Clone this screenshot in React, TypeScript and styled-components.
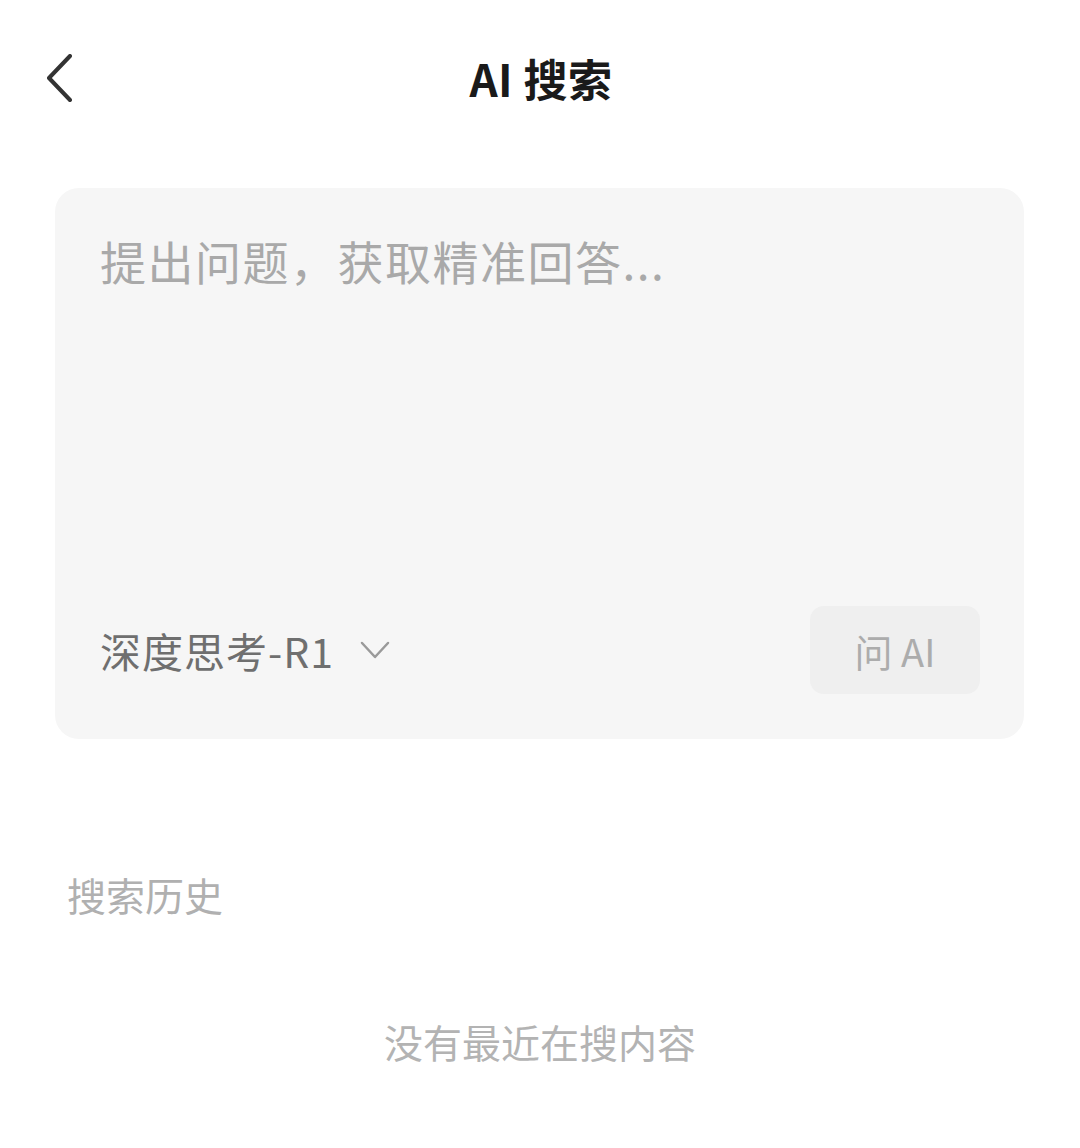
import React, { useState } from "react";
import styled, { createGlobalStyle } from "styled-components";

const GlobalStyle = createGlobalStyle`
  html, body {
    margin: 0;
    padding: 0;
    background: #ffffff;
  }
  body {
    font-family: "Noto Sans CJK SC", "Noto Sans", sans-serif;
    -webkit-font-smoothing: antialiased;
  }
`;

const Page = styled.div`
  width: 1080px;
  min-height: 1148px;
  background: #fff;
  display: flex;
  flex-direction: column;
`;

const Header = styled.div`
  height: 156px;
  display: grid;
  grid-template-columns: 1fr auto 1fr;
  align-items: center;
  padding: 0 40px 0 42px;
  box-sizing: border-box;
`;

const BackButton = styled.button`
  justify-self: start;
  width: 40px;
  height: 56px;
  padding: 0;
  border: none;
  background: none;
  display: flex;
  align-items: center;
  justify-content: flex-start;
  cursor: pointer;
`;

const Title = styled.h1`
  margin: 0;
  font-size: 44px;
  font-weight: 700;
  color: #1a1a1a;
  letter-spacing: 0.5px;
`;

const AskCard = styled.div`
  margin: 32px 56px 0 55px;
  height: 551px;
  box-sizing: border-box;
  background: #f6f6f6;
  border-radius: 24px;
  padding: 43px 44px 45px 45px;
  display: flex;
  flex-direction: column;
  justify-content: space-between;
`;

const QuestionInput = styled.textarea`
  border: none;
  outline: none;
  background: transparent;
  resize: none;
  height: 300px;
  padding: 0;
  font-family: inherit;
  font-size: 46px;
  line-height: 1.3;
  letter-spacing: 1.5px;
  color: #333;
  &::placeholder {
    color: #a9a9a9;
  }
`;

const Footer = styled.div`
  display: flex;
  align-items: center;
  justify-content: space-between;
`;

const ModelPicker = styled.button`
  border: none;
  background: none;
  padding: 0;
  display: flex;
  align-items: center;
  gap: 26px;
  font-family: inherit;
  font-size: 41px;
  letter-spacing: 1px;
  color: #6f6f6f;
  cursor: pointer;
`;

const AskButton = styled.button<{ $enabled: boolean }>`
  width: 170px;
  height: 88px;
  border: none;
  border-radius: 14px;
  background: ${(p) => (p.$enabled ? "#222" : "#efefef")};
  color: ${(p) => (p.$enabled ? "#fff" : "#acacac")};
  font-family: inherit;
  font-size: 38px;
  cursor: ${(p) => (p.$enabled ? "pointer" : "default")};
`;

const HistorySection = styled.div`
  padding: 130px 67px 0;
  display: flex;
  flex-direction: column;
`;

const SectionTitle = styled.div`
  font-size: 39px;
  color: #b0b0b0;
  line-height: 1.3;
`;

const EmptyText = styled.div`
  margin-top: 96px;
  text-align: center;
  font-size: 39px;
  color: #b3b3b3;
  line-height: 1.3;
`;

export default function App() {
  const [question, setQuestion] = useState("");

  return (
    <Page>
      <GlobalStyle />
      <Header>
        <BackButton aria-label="返回">
          <svg width="30" height="48" viewBox="0 0 30 48" fill="none">
            <path
              d="M28 2 L7 24 L28 46"
              stroke="#333"
              strokeWidth="4"
              strokeLinecap="round"
              strokeLinejoin="round"
            />
          </svg>
        </BackButton>
        <Title>AI 搜索</Title>
        <div />
      </Header>

      <AskCard>
        <QuestionInput
          placeholder="提出问题，获取精准回答..."
          value={question}
          onChange={(e) => setQuestion(e.target.value)}
        />
        <Footer>
          <ModelPicker>
            深度思考-R1
            <svg width="30" height="18" viewBox="0 0 30 18" fill="none">
              <path
                d="M2 2 L15 16 L28 2"
                stroke="#9a9a9a"
                strokeWidth="2.5"
                strokeLinecap="round"
                strokeLinejoin="round"
              />
            </svg>
          </ModelPicker>
          <AskButton $enabled={question.trim().length > 0}>问 AI</AskButton>
        </Footer>
      </AskCard>

      <HistorySection>
        <SectionTitle>搜索历史</SectionTitle>
        <EmptyText>没有最近在搜内容</EmptyText>
      </HistorySection>
    </Page>
  );
}
